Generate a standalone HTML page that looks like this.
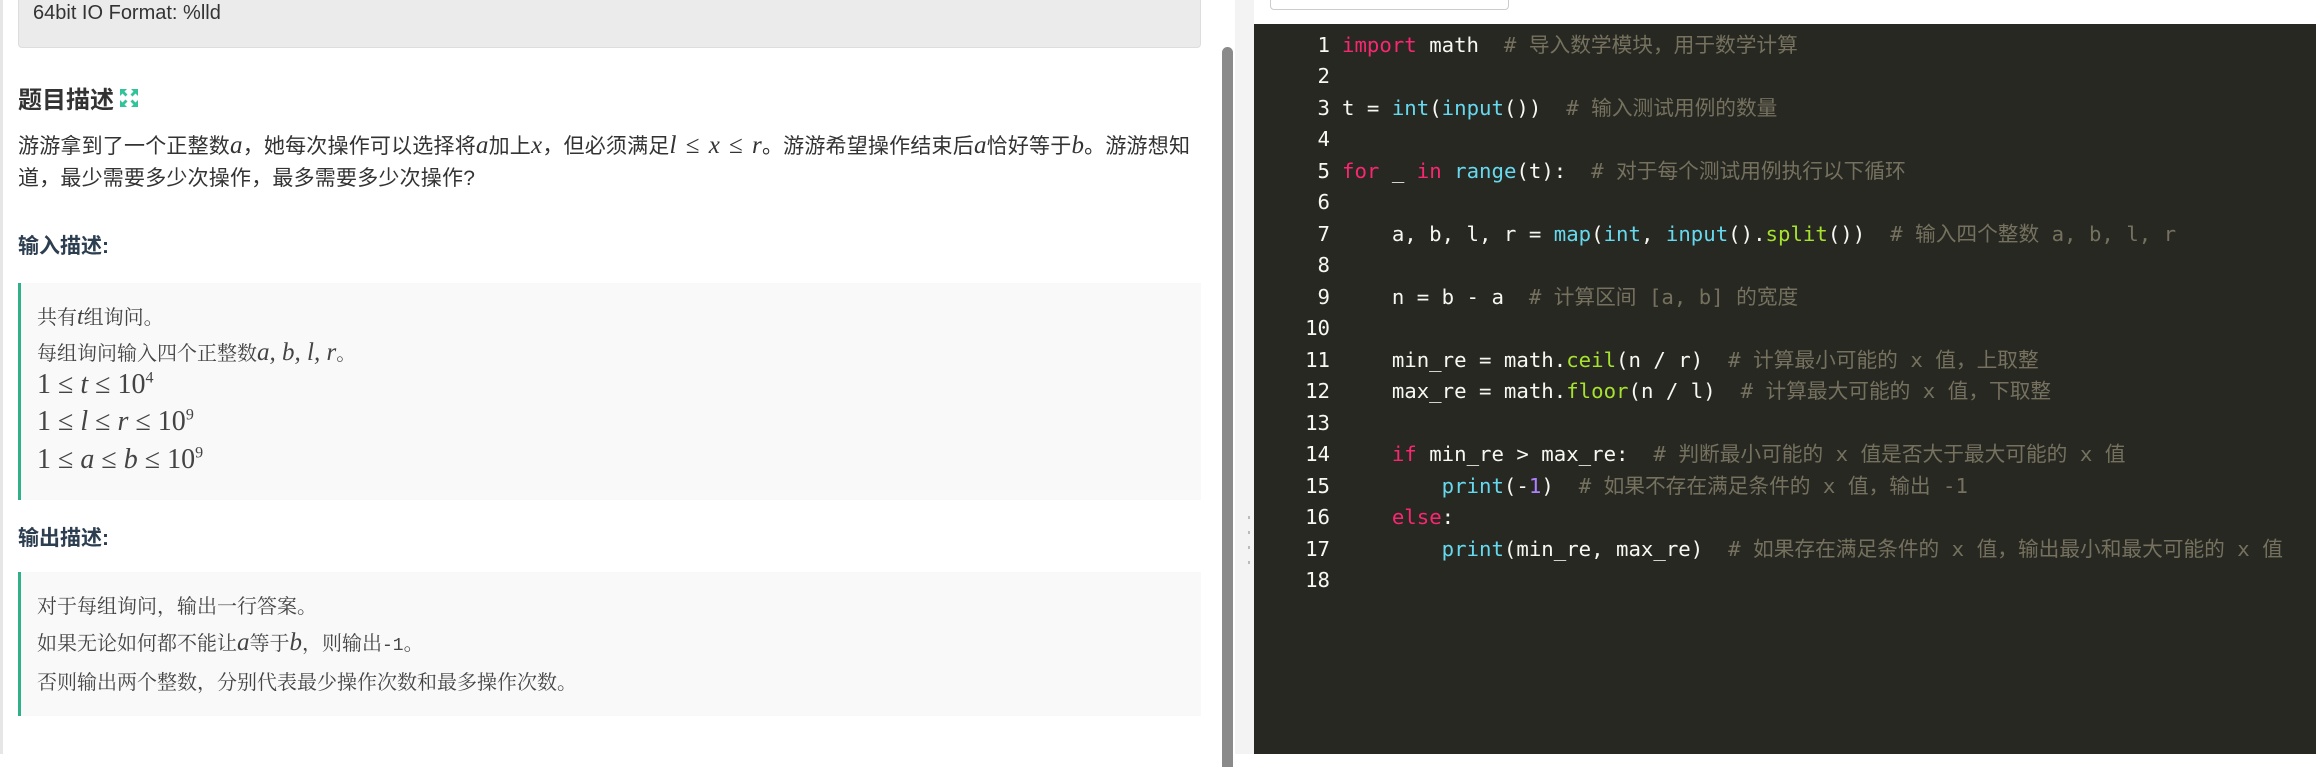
<!DOCTYPE html>
<html><head><meta charset="utf-8"><style>
*{margin:0;padding:0;box-sizing:border-box}
body{width:2316px;height:754px;overflow:hidden;background:#fff;position:relative;font-family:"Liberation Sans","Noto Sans CJK SC",sans-serif;}
.abs{position:absolute}
.m{font-family:"Liberation Serif",serif;font-style:italic;font-size:25px}
.mr{font-family:"Liberation Serif",serif;font-size:25px;margin:0 3px}
.code{font-family:"DejaVu Sans Mono","Noto Sans CJK SC",monospace;font-size:20.7px;color:#f8f8f2;white-space:pre;}
.k{color:#f92672}.b{color:#66d9ef}.g{color:#a6e22e}.c{color:#75715e}.n{color:#ae81ff}
.bq{position:absolute;left:18px;width:1183px;background:#f9f9f9;border-left:3px solid #2fb08a;font-family:"Liberation Serif","Noto Serif CJK SC",serif;color:#444;font-size:20px}
.bq div{position:absolute;left:16px;white-space:nowrap}
.bq .mm{font-family:"Liberation Serif",serif;font-size:28px}
</style></head><body>
<div class="abs" style="left:0;top:0;width:3px;height:754px;background:#e6e6e6"></div>
<div class="abs" style="left:18px;top:-6px;width:1183px;height:54px;background:#ebebeb;border:1px solid #ddd;border-radius:4px"></div>
<div class="abs" style="left:33px;top:2px;font-size:20px;color:#333">64bit IO Format: %lld</div>
<div class="abs" style="left:18px;top:80px;font-size:24px;font-weight:bold;color:#333">题目描述</div>
<svg class="abs" style="left:119px;top:88px" width="20" height="20" viewBox="0 0 20 20" fill="#32c39b"><path d="M1 1h7l-2.5 2.5 3 3-2 2-3-3L1 8zM19 1v7l-2.5-2.5-3 3-2-2 3-3L12 1zM1 19v-7l2.5 2.5 3-3 2 2-3 3L8 19zM19 19h-7l2.5-2.5-3-3 2-2 3 3L19 12z"/></svg>
<div class="abs" style="left:18px;top:130px;font-size:21px;color:#333;line-height:32px;white-space:nowrap;letter-spacing:0.2px">游游拿到了一个正整数<span class="m">a</span>，她每次操作可以选择将<span class="m">a</span>加上<span class="m">x</span>，但必须满足<span class="m">l</span> <span class="mr">≤</span> <span class="m">x</span> <span class="mr">≤</span> <span class="m">r</span>。游游希望操作结束后<span class="m">a</span>恰好等于<span class="m">b</span>。游游想知<br>道，最少需要多少次操作，最多需要多少次操作?</div>
<div class="abs" style="left:18px;top:230px;font-size:21px;font-weight:bold;color:#2c3e50">输入描述:</div>
<div class="bq" style="top:283px;height:217px">
<div style="top:18px">共有<i class="mm" style="font-size:24px">t</i>组询问。</div>
<div style="top:54px">每组询问输入四个正整数<i class="mm" style="font-size:25px">a, b, l, r</i>。</div>
<div style="top:86px" class="mm">1 ≤ <i>t</i> ≤ 10<sup style="font-size:16px">4</sup></div>
<div style="top:123px" class="mm">1 ≤ <i>l</i> ≤ <i>r</i> ≤ 10<sup style="font-size:16px">9</sup></div>
<div style="top:161px" class="mm">1 ≤ <i>a</i> ≤ <i>b</i> ≤ 10<sup style="font-size:16px">9</sup></div>
</div>
<div class="abs" style="left:18px;top:522px;font-size:21px;font-weight:bold;color:#2c3e50">输出描述:</div>
<div class="bq" style="top:572px;height:144px">
<div style="top:18px">对于每组询问，输出一行答案。</div>
<div style="top:55px">如果无论如何都不能让<i class="mm" style="font-size:25px">a</i>等于<i class="mm" style="font-size:25px">b</i>，则输出<span style="font-family:'Liberation Mono',monospace;font-size:18px">-1</span>。</div>
<div style="top:94px">否则输出两个整数，分别代表最少操作次数和最多操作次数。</div>
</div>
<div class="abs" style="left:1222px;top:47px;width:11px;height:720px;background:#8a8a8a;border-radius:6px 6px 0 0"></div>
<div class="abs" style="left:1235px;top:0;width:19px;height:754px;background:#f3f3f3"></div>
<div class="abs" style="left:1248px;top:516px;width:2px;height:60px;background:repeating-linear-gradient(#bbb 0 3px,transparent 3px 15px)"></div>
<div class="abs" style="left:1270px;top:-4px;width:239px;height:14px;border:1px solid #ccc;border-radius:4px;background:#fff"></div>
<div class="abs" style="left:1254px;top:24px;width:1062px;height:730px;background:#272822"></div>
<div class="abs code" style="left:1270px;top:30px;width:60px;line-height:31.47px;text-align:right">1
2
3
4
5
6
7
8
9
10
11
12
13
14
15
16
17
18</div>
<div class="abs code" style="left:1342px;top:30px;line-height:31.47px"><span class="k">import</span> math  <span class="c"># 导入数学模块，用于数学计算</span>

t = <span class="b">int</span>(<span class="b">input</span>())  <span class="c"># 输入测试用例的数量</span>

<span class="k">for</span> _ <span class="k">in</span> <span class="b">range</span>(t):  <span class="c"># 对于每个测试用例执行以下循环</span>

    a, b, l, r = <span class="b">map</span>(<span class="b">int</span>, <span class="b">input</span>().<span class="g">split</span>())  <span class="c"># 输入四个整数 a, b, l, r</span>

    n = b - a  <span class="c"># 计算区间 [a, b] 的宽度</span>

    min_re = math.<span class="g">ceil</span>(n / r)  <span class="c"># 计算最小可能的 x 值，上取整</span>
    max_re = math.<span class="g">floor</span>(n / l)  <span class="c"># 计算最大可能的 x 值，下取整</span>

    <span class="k">if</span> min_re &gt; max_re:  <span class="c"># 判断最小可能的 x 值是否大于最大可能的 x 值</span>
        <span class="b">print</span>(-<span class="n">1</span>)  <span class="c"># 如果不存在满足条件的 x 值，输出 -1</span>
    <span class="k">else</span>:
        <span class="b">print</span>(min_re, max_re)  <span class="c"># 如果存在满足条件的 x 值，输出最小和最大可能的 x 值</span>
</div>
</body></html>
